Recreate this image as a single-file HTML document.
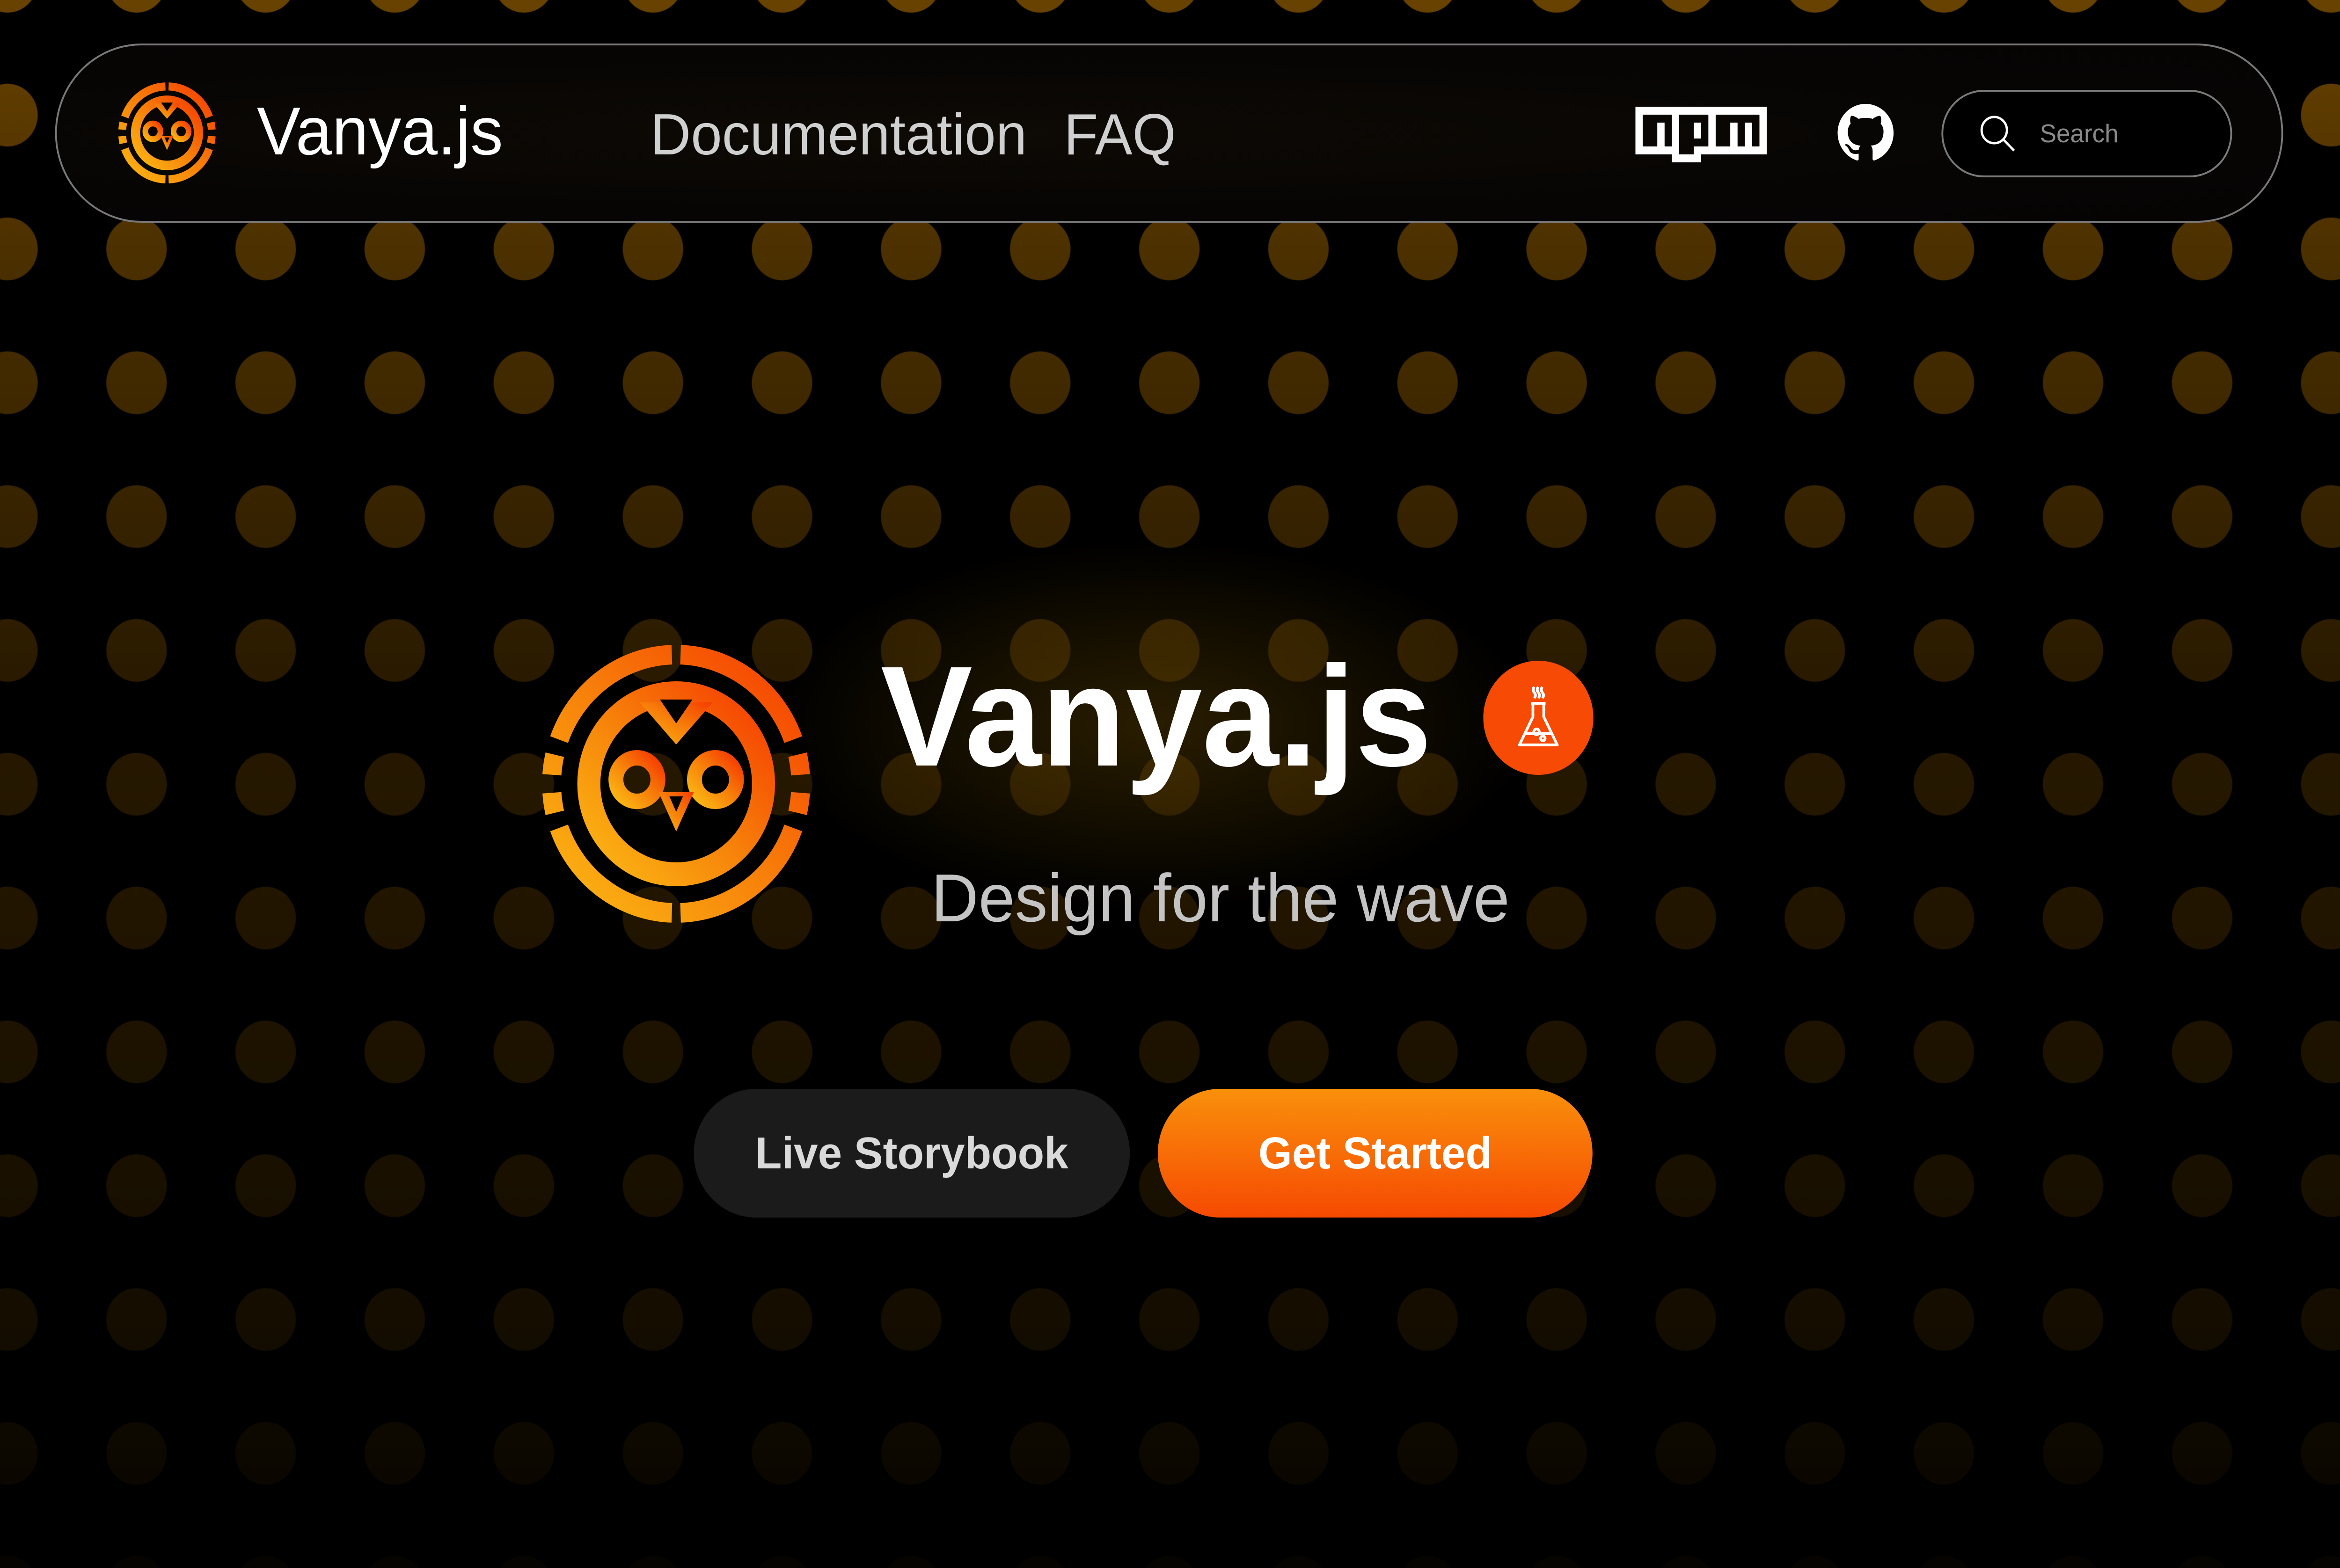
<!DOCTYPE html>
<html><head><meta charset="utf-8"><style>
html,body{margin:0;padding:0;background:#000;}
body{width:5000px;height:3351px;position:relative;overflow:hidden;font-family:"Liberation Sans",sans-serif;}
#wrap{position:absolute;left:0;top:0;width:5184px;height:3351px;transform:scaleX(0.96451);transform-origin:0 0;overflow:hidden;}
.dots{position:absolute;inset:0;background-image:radial-gradient(circle at 143px 143px,#684200 0,#684200 66px,rgba(104,66,0,0) 68px);background-size:286px 286px;background-position:-126.5px -183px;}
.fade{position:absolute;inset:0;background:linear-gradient(to bottom,rgba(0,0,0,0) 0px,rgba(0,0,0,0.3) 600px,rgba(0,0,0,0.62) 1500px,rgba(0,0,0,0.8) 2800px,rgba(0,0,0,0.95) 3351px);}
.glow{position:absolute;left:1700px;top:1150px;width:1700px;height:800px;background:radial-gradient(ellipse at center,rgba(120,85,0,0.35) 0,rgba(120,85,0,0.15) 40%,rgba(0,0,0,0) 70%);}
.nav{position:absolute;left:122px;top:93px;width:4928px;height:375px;border:4px solid #787878;border-radius:200px;background:radial-gradient(ellipse at 40% 50%,#0e0a05 0,#070504 60%,#050403 100%);}
.t{position:absolute;white-space:nowrap;line-height:1;}
.btn{position:absolute;border-radius:140px;display:flex;align-items:center;justify-content:center;font-weight:bold;font-size:96px;}
</style></head><body><div id="wrap">
<div class="dots"></div>
<div class="fade"></div>
<div class="glow"></div>

<div class="nav"></div>
<svg style="position:absolute;left:262px;top:176px" width="216" height="216" viewBox="-100 -100 200 200">
<defs><linearGradient id="g1" x1="0" y1="1" x2="1" y2="0"><stop offset="0" stop-color="#fbb814"/><stop offset="0.5" stop-color="#f7800a"/><stop offset="1" stop-color="#f53c00"/></linearGradient></defs>
<g fill="none" stroke="url(#g1)" stroke-width="16">
<path d="M86.45 -31.46A92 92 0 0 0 3.21 -91.94M-3.21 -91.94A92 92 0 0 0 -86.45 -31.46M-86.45 31.46A92 92 0 0 0 -3.21 91.94M3.21 91.94A92 92 0 0 0 86.45 31.46M91.78 -6.42A92 92 0 0 0 89.64 -20.7M89.64 20.7A92 92 0 0 0 91.78 6.42M-89.64 -20.7A92 92 0 0 0 -91.78 -6.42M-91.78 6.42A92 92 0 0 0 -89.64 20.7"/>
<circle cx="0" cy="0" r="64.5" stroke-width="19"/>
<circle cx="-29" cy="-3" r="15.5" stroke-width="11.5"/>
<circle cx="29" cy="-3" r="15.5" stroke-width="11.5"/>
</g>
<g fill="url(#g1)"><polygon points="-27,-58 27,-58 0,-28"/><polygon points="-13,6 13,6 0,34"/></g>
<g fill="#000"><polygon points="-12,-60 12,-60 0,-43"/><polygon points="-5,9 5,9 0,20"/></g>
</svg>
<div class="t" style="left:569px;top:208px;font-size:145px;color:#fff;">Vanya.js</div>
<div class="t" style="left:1441px;top:226px;font-size:124px;color:#d0d0d0;">Documentation</div>
<div class="t" style="left:2357px;top:226px;font-size:124px;color:#d0d0d0;">FAQ</div>

<svg style="position:absolute;left:3623px;top:228px" width="291" height="119" viewBox="0 0 18 7" preserveAspectRatio="none"><path fill="#fff" fill-rule="evenodd" d="M0,0h18v6H9v1H5V6H0V0z M1,5h2V2h1v3h1V1H1V5z M6,1v5h2V5h2V1H6z M8,2h1v2H8V2z M11,1v4h2V2h1v3h1V2h1v3h1V1H11z"/></svg>
<svg style="position:absolute;left:4071px;top:222px" width="124" height="124" viewBox="0 0 16 16"><path fill="#fff" d="M8 0C3.58 0 0 3.58 0 8c0 3.54 2.29 6.53 5.47 7.59.4.07.55-.17.55-.38 0-.19-.01-.82-.01-1.49-2.01.37-2.53-.49-2.69-.94-.09-.23-.48-.94-.82-1.13-.28-.15-.68-.52-.01-.53.63-.01 1.08.58 1.23.82.72 1.21 1.87.87 2.33.66.07-.52.28-.87.51-1.07-1.78-.2-3.64-.89-3.64-3.95 0-.87.31-1.59.82-2.15-.08-.2-.36-1.02.08-2.12 0 0 .67-.21 2.2.82.64-.18 1.32-.27 2-.27.68 0 1.36.09 2 .27 1.53-1.04 2.2-.82 2.2-.82.44 1.1.16 1.92.08 2.12.51.56.82 1.27.82 2.15 0 3.07-1.87 3.75-3.65 3.95.29.25.54.73.54 1.48 0 1.07-.01 1.93-.01 2.2 0 .21.15.46.55.38A8.013 8.013 0 0016 8c0-4.42-3.58-8-8-8z"/></svg>
<div style="position:absolute;left:4301px;top:192px;width:636px;height:179px;border:4px solid #7a7a7a;border-radius:100px;background:#000;"></div>
<svg style="position:absolute;left:4380px;top:240px" width="100" height="100" viewBox="0 0 100 100"><circle cx="38" cy="38" r="28" fill="none" stroke="#fff" stroke-width="5"/><line x1="58" y1="58" x2="82" y2="82" stroke="#fff" stroke-width="5"/></svg>
<div class="t" style="left:4519px;top:258px;font-size:55px;color:#8a8a8a;">Search</div>

<svg style="position:absolute;left:1198px;top:1375px" width="600" height="600" viewBox="-100 -100 200 200">
<defs><linearGradient id="g2" x1="0" y1="1" x2="1" y2="0"><stop offset="0" stop-color="#fbb814"/><stop offset="0.5" stop-color="#f7800a"/><stop offset="1" stop-color="#f53c00"/></linearGradient></defs>
<g fill="none" stroke="url(#g2)" stroke-width="14">
<path d="M86.45 -31.46A92 92 0 0 0 3.21 -91.94M-3.21 -91.94A92 92 0 0 0 -86.45 -31.46M-86.45 31.46A92 92 0 0 0 -3.21 91.94M3.21 91.94A92 92 0 0 0 86.45 31.46M91.78 -6.42A92 92 0 0 0 89.64 -20.7M89.64 20.7A92 92 0 0 0 91.78 6.42M-89.64 -20.7A92 92 0 0 0 -91.78 -6.42M-91.78 6.42A92 92 0 0 0 -89.64 20.7"/>
<circle cx="0" cy="0" r="64.5" stroke-width="17"/>
<circle cx="-29" cy="-3" r="15.5" stroke-width="11"/>
<circle cx="29" cy="-3" r="15.5" stroke-width="11"/>
</g>
<g fill="url(#g2)"><polygon points="-27,-58 27,-58 0,-28"/><polygon points="-13,6 13,6 0,34"/></g>
<g fill="#000"><polygon points="-12,-60 12,-60 0,-43"/><polygon points="-5,9 5,9 0,20"/></g>
</svg>

<div class="t" style="left:1951px;top:1378px;font-size:305px;font-weight:bold;color:#fff;">Vanya.js</div>
<svg style="position:absolute;left:3286px;top:1412px" width="244" height="244" viewBox="-122 -122 244 244">
<circle cx="0" cy="0" r="122" fill="#f74a05"/>
<g fill="none" stroke="#fff" stroke-width="6" stroke-linejoin="round">
<path d="M-9 -66q-5 6 0 12t0 12M0 -66q-5 6 0 12t0 12M9 -66q-5 6 0 12t0 12"/>
<path d="M-16 -31H16M-12 -31V-2L-42 58H42L12 -2V-31"/>
<path d="M-30 34H30"/>
<circle cx="-4" cy="30" r="6"/><circle cx="10" cy="44" r="5"/>
</g></svg>
<div class="t" style="left:2063px;top:1847px;font-size:145px;color:#c4c4c4;">Design for the wave</div>

<div class="btn" style="left:1537px;top:2327px;width:966px;height:275px;background:#1b1b1b;color:#dadada;">Live Storybook</div>
<div class="btn" style="left:2565px;top:2327px;width:963px;height:275px;background:linear-gradient(to bottom,#f9900b,#f64a02);color:#fff;">Get Started</div>
</div></body></html>
